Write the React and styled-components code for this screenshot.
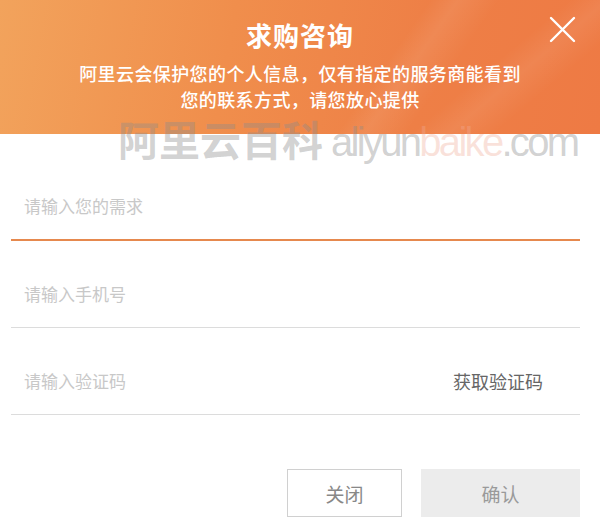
import React from 'react'
import styled, { createGlobalStyle } from 'styled-components'

const Global = createGlobalStyle`
  html, body {
    margin: 0;
    padding: 0;
    background: #fff;
    font-family: "Noto Sans CJK SC", "Liberation Sans", sans-serif;
  }
`

const Dialog = styled.div`
  position: relative;
  width: 600px;
  height: 531px;
  background: #fff;
  overflow: hidden;
`

const Header = styled.header`
  position: relative;
  height: 134px;
  box-sizing: border-box;
  padding-top: 16px;
  text-align: center;
  color: #fff;
  background:
    linear-gradient(125deg, transparent 62%, rgba(255,255,255,0.08) 66%, transparent 72%),
    linear-gradient(140deg, transparent 75%, rgba(255,255,255,0.07) 80%, transparent 86%),
    linear-gradient(100deg, #f2a35c 0%, #f08e4c 38%, #ee7f46 70%, #ee7a44 100%);
`

const Title = styled.h1`
  margin: 0;
  font-size: 26px;
  line-height: 38px;
  font-weight: 700;
  letter-spacing: 1px;
`

const Notice = styled.p`
  margin: 6px 0 0;
  font-size: 18px;
  line-height: 26px;
  font-weight: 500;
  letter-spacing: 0.4px;
`

const Close = styled.button`
  position: absolute;
  top: 16px;
  right: 24px;
  width: 27px;
  height: 27px;
  padding: 0;
  border: none;
  background: transparent;
  cursor: pointer;
`

const Form = styled.form`
  padding: 20px 20px 0 11px;
`

const Field = styled.div`
  display: flex;
  align-items: flex-end;
  height: 87px;
  box-sizing: border-box;
  padding: 0 37px 21px 13px;
  border-bottom: ${p => (p.$active ? '2px solid #e6894e' : '1px solid #dcdcdc')};
`

const Input = styled.input`
  flex: 1;
  border: none;
  outline: none;
  padding: 0;
  font-family: inherit;
  font-size: 17px;
  line-height: 24px;
  color: #333;
  background: transparent;
  &::placeholder {
    color: #c8c8c8;
  }
`

const CodeLink = styled.span`
  font-size: 18px;
  line-height: 24px;
  color: #666;
`

const Actions = styled.div`
  display: flex;
  justify-content: flex-end;
  gap: 19px;
  margin-top: 54px;
`

const Button = styled.button`
  width: ${p => p.$w}px;
  height: 48px;
  box-sizing: border-box;
  font-family: inherit;
  font-size: 19px;
  color: ${p => (p.$primary ? '#9a9a9a' : '#888')};
  background: ${p => (p.$primary ? '#ececec' : '#fff')};
  border: ${p => (p.$primary ? 'none' : '1px solid #d0d0d0')};
  cursor: pointer;
`

const Watermark = styled.div`
  position: absolute;
  top: 114px;
  left: 118px;
  display: flex;
  align-items: baseline;
  gap: 8px;
  pointer-events: none;
  color: rgba(140, 140, 140, 0.4);
`

const MarkCn = styled.span`
  font-size: 41px;
  font-weight: 700;
  line-height: 48px;
`

const MarkEn = styled.span`
  font-family: "Liberation Sans", sans-serif;
  font-size: 40px;
  letter-spacing: -2.7px;
  line-height: 48px;
  & b {
    font-weight: 400;
    color: rgba(240, 170, 150, 0.35);
  }
`

export default function App() {
  return (
    <Dialog>
      <Global />
      <Header>
        <Title>求购咨询</Title>
        <Notice>
          阿里云会保护您的个人信息，仅有指定的服务商能看到
          <br />
          您的联系方式，请您放心提供
        </Notice>
        <Close aria-label="close">
          <svg width="27" height="27" viewBox="0 0 27 27">
            <path d="M2 2L25 25M25 2L2 25" stroke="#fff" strokeWidth="2.4" strokeLinecap="round" />
          </svg>
        </Close>
      </Header>

      <Form>
        <Field $active>
          <Input placeholder="请输入您的需求" />
        </Field>
        <Field>
          <Input placeholder="请输入手机号" />
        </Field>
        <Field>
          <Input placeholder="请输入验证码" />
          <CodeLink>获取验证码</CodeLink>
        </Field>
        <Actions>
          <Button type="button" $w={115}>关闭</Button>
          <Button type="button" $w={159} $primary>确认</Button>
        </Actions>
      </Form>

      <Watermark>
        <MarkCn>阿里云百科</MarkCn>
        <MarkEn>aliyun<b>baike</b>.com</MarkEn>
      </Watermark>
    </Dialog>
  )
}
